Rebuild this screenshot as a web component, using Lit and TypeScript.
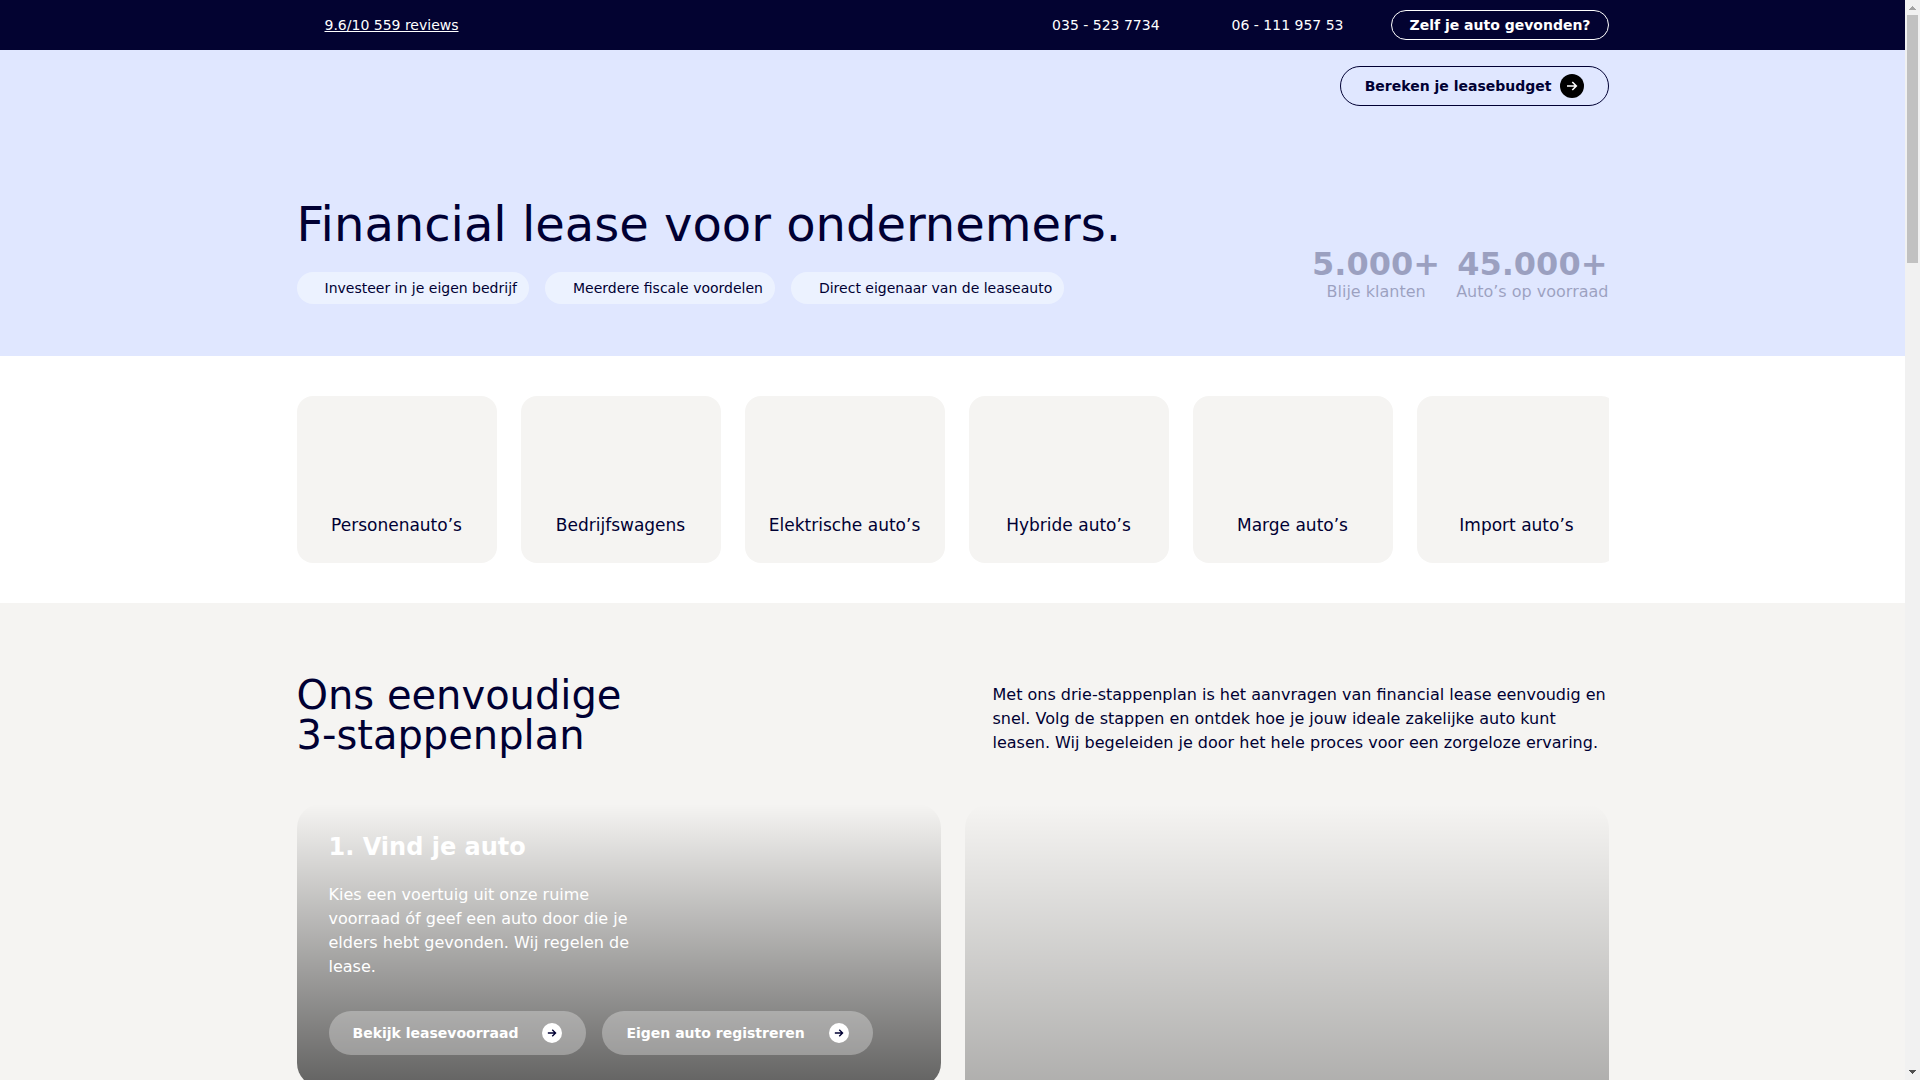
import { LitElement, html, css } from "lit";
import { customElement } from "lit/decorators.js";

const USPS = [
  "Investeer in je eigen bedrijf",
  "Meerdere fiscale voordelen",
  "Direct eigenaar van de leaseauto",
];

const STATS = [
  { value: "5.000+", label: "Blije klanten" },
  { value: "45.000+", label: "Auto’s op voorraad" },
];

const CATEGORIES = [
  "Personenauto’s",
  "Bedrijfswagens",
  "Elektrische auto’s",
  "Hybride auto’s",
  "Marge auto’s",
  "Import auto’s",
];

@customElement("arrow-badge")
export class ArrowBadge extends LitElement {
  static styles = css`
    :host {
      display: flex;
      align-items: center;
      justify-content: center;
      flex: none;
      border-radius: 50%;
    }
    .arrow {
      display: block;
      width: 50%;
      height: 50%;
    }
  `;

  render() {
    return html`
      <svg class="arrow" viewBox="0 0 12 12" fill="none" stroke="currentColor"
        stroke-width="1.6" aria-hidden="true">
        <path d="M1 6H10M6.3 2L10.3 6L6.3 10" />
      </svg>
    `;
  }
}

@customElement("app-root")
export class AppRoot extends LitElement {
  static styles = css`
    :host {
      --navy: #000033;
      --sand: #f5f4f2;
      display: flex;
      height: 100vh;
      overflow: hidden;
      color: var(--navy);
      background: #fff;
      font-family: "DejaVu Sans", sans-serif;
      font-size: 16px;
      line-height: 24px;
    }
    * {
      box-sizing: border-box;
    }
    h1,
    h2,
    h3,
    p,
    ul {
      margin: 0;
      padding: 0;
      list-style: none;
    }
    a {
      color: inherit;
      text-decoration: none;
    }
    .page {
      flex: 1;
      min-width: 0;
      overflow-y: auto;
      scrollbar-width: none;
    }
    .container {
      max-width: 1312px;
      margin: 0 auto;
    }

    /* Top bar */
    .topbar {
      background: #030331;
      color: #fff;
      font-size: 14px;
    }
    .topbar-row {
      display: flex;
      align-items: center;
      gap: 48px;
      padding: 10px 0;
    }
    .reviews {
      margin: 0 auto 0 28px;
      text-decoration: underline;
    }
    .phone {
      padding-left: 24px;
    }
    .own-car {
      padding: 2px 17px;
      border: 1px solid #fff;
      border-radius: 16px;
      font-weight: 700;
    }

    /* Hero */
    .hero {
      background: #e0e7ff;
    }
    .nav {
      display: flex;
      justify-content: flex-end;
      padding: 16px 0;
    }
    .budget {
      display: flex;
      align-items: center;
      gap: 8px;
      padding: 7px 24px;
      border: 1px solid var(--navy);
      border-radius: 20px;
      font-size: 14px;
      font-weight: 700;
    }
    .budget-badge {
      width: 24px;
      height: 24px;
      background: #000;
      color: #fff;
    }
    .intro {
      display: flex;
      align-items: flex-end;
      justify-content: space-between;
      padding: 78px 0 52px;
    }
    .title {
      font-size: 48px;
      line-height: 48px;
      font-weight: 400;
    }
    .usps {
      display: flex;
      gap: 16px;
      margin-top: 24px;
    }
    .usp {
      padding: 4px 12px 4px 28px;
      border-radius: 16px;
      background: #ecf2ff;
      font-size: 14px;
    }
    .stats {
      display: flex;
      gap: 16px;
      text-align: center;
      opacity: 0.3;
    }
    .stat-value {
      display: block;
      font-size: 32px;
      line-height: 32px;
      font-weight: 700;
    }
    .stat-label {
      display: block;
    }

    /* Categories */
    .categories {
      display: flex;
      gap: 24px;
      overflow: hidden;
      margin: 40px auto;
    }
    .category {
      display: flex;
      flex: none;
      align-items: flex-end;
      justify-content: center;
      width: 200px;
      padding: 117px 16px 26px;
      border-radius: 16px;
      background: var(--sand);
      font-size: 17px;
      white-space: nowrap;
    }

    /* Steps */
    .steps {
      padding: 72px 0;
      background: var(--sand);
    }
    .steps-head {
      display: grid;
      grid-template-columns: 1fr 1fr;
      align-items: end;
      gap: 80px;
      margin-bottom: 49px;
    }
    .steps-title {
      font-size: 40px;
      line-height: 40px;
      font-weight: 400;
    }
    .step-grid {
      display: grid;
      grid-template-columns: 1fr 1fr;
      grid-auto-rows: 1fr;
      gap: 24px;
    }
    .step {
      padding: 32px;
      border-radius: 24px;
      background: linear-gradient(rgba(0, 0, 0, 0), rgba(0, 0, 0, 0.6));
      color: #fff;
    }
    .step-tall {
      grid-row: span 2;
    }
    .step-title {
      font-size: 24px;
      line-height: 22px;
      font-weight: 700;
    }
    .step-text {
      max-width: 320px;
      margin: 25px 0 32px;
    }
    .actions {
      display: flex;
      gap: 16px;
    }
    .action {
      display: flex;
      align-items: center;
      gap: 24px;
      padding: 10px 24px;
      border-radius: 22px;
      background: rgba(255, 255, 255, 0.3);
      font-size: 14px;
      font-weight: 700;
    }
    .action-badge {
      width: 20px;
      height: 20px;
      background: #fff;
      color: var(--navy);
    }

    /* Scroll rail */
    .rail {
      display: flex;
      flex: none;
      flex-direction: column;
      align-items: center;
      width: 15px;
      background: #f1f1f1;
    }
    .rail-arrow {
      display: block;
      width: 15px;
      height: 15px;
    }
    .rail-track {
      flex: 1;
      width: 11px;
    }
    .rail-thumb {
      height: 248px;
      background: #c1c1c1;
    }
  `;

  render() {
    return html`
      <div class="page">
        <div class="topbar">
          <div class="container topbar-row">
            <a class="reviews" href="#reviews">9.6/10 559 reviews</a>
            <a class="phone" href="tel:0355237734">035 - 523 7734</a>
            <a class="phone" href="tel:0611195753">06 - 111 957 53</a>
            <a class="own-car" href="#eigen-auto">Zelf je auto gevonden?</a>
          </div>
        </div>

        <header class="hero">
          <div class="container">
            <nav class="nav">
              <a class="budget" href="#budget">
                Bereken je leasebudget
                <arrow-badge class="budget-badge"></arrow-badge>
              </a>
            </nav>
            <div class="intro">
              <div>
                <h1 class="title">Financial lease voor ondernemers.</h1>
                <ul class="usps">
                  ${USPS.map((usp) => html`<li class="usp">${usp}</li>`)}
                </ul>
              </div>
              <div class="stats">
                ${STATS.map(
                  (stat) => html`
                    <div>
                      <strong class="stat-value">${stat.value}</strong>
                      <span class="stat-label">${stat.label}</span>
                    </div>
                  `
                )}
              </div>
            </div>
          </div>
        </header>

        <nav class="container categories">
          ${CATEGORIES.map(
            (name) => html`<a class="category" href="#voorraad">${name}</a>`
          )}
        </nav>

        <section class="steps">
          <div class="container">
            <div class="steps-head">
              <h2 class="steps-title">Ons eenvoudige<br />3-stappenplan</h2>
              <p>
                Met ons drie-stappenplan is het aanvragen van financial lease
                eenvoudig en snel. Volg de stappen en ontdek hoe je jouw ideale
                zakelijke auto kunt leasen. Wij begeleiden je door het hele
                proces voor een zorgeloze ervaring.
              </p>
            </div>
            <div class="step-grid">
              <article class="step">
                <h3 class="step-title">1. Vind je auto</h3>
                <p class="step-text">
                  Kies een voertuig uit onze ruime voorraad óf geef een auto
                  door die je elders hebt gevonden. Wij regelen de lease.
                </p>
                <div class="actions">
                  <a class="action" href="#voorraad">
                    Bekijk leasevoorraad
                    <arrow-badge class="action-badge"></arrow-badge>
                  </a>
                  <a class="action" href="#registreren">
                    Eigen auto registreren
                    <arrow-badge class="action-badge"></arrow-badge>
                  </a>
                </div>
              </article>
              <article class="step step-tall"></article>
              <article class="step"></article>
            </div>
          </div>
        </section>
      </div>

      <div class="rail" aria-hidden="true">
        <svg class="rail-arrow" viewBox="0 0 15 15" shape-rendering="crispEdges">
          <path d="M7 6h1v1h1v1h1v1h1v1H4V9h1V8h1V7h1z" fill="#a3a3a3" />
        </svg>
        <div class="rail-track"><div class="rail-thumb"></div></div>
        <svg class="rail-arrow" viewBox="0 0 15 15" shape-rendering="crispEdges">
          <path d="M4 5h7v1h-1v1H9v1H8v1H7V8H6V7H5V6H4z" fill="#505050" />
        </svg>
      </div>
    `;
  }
}
